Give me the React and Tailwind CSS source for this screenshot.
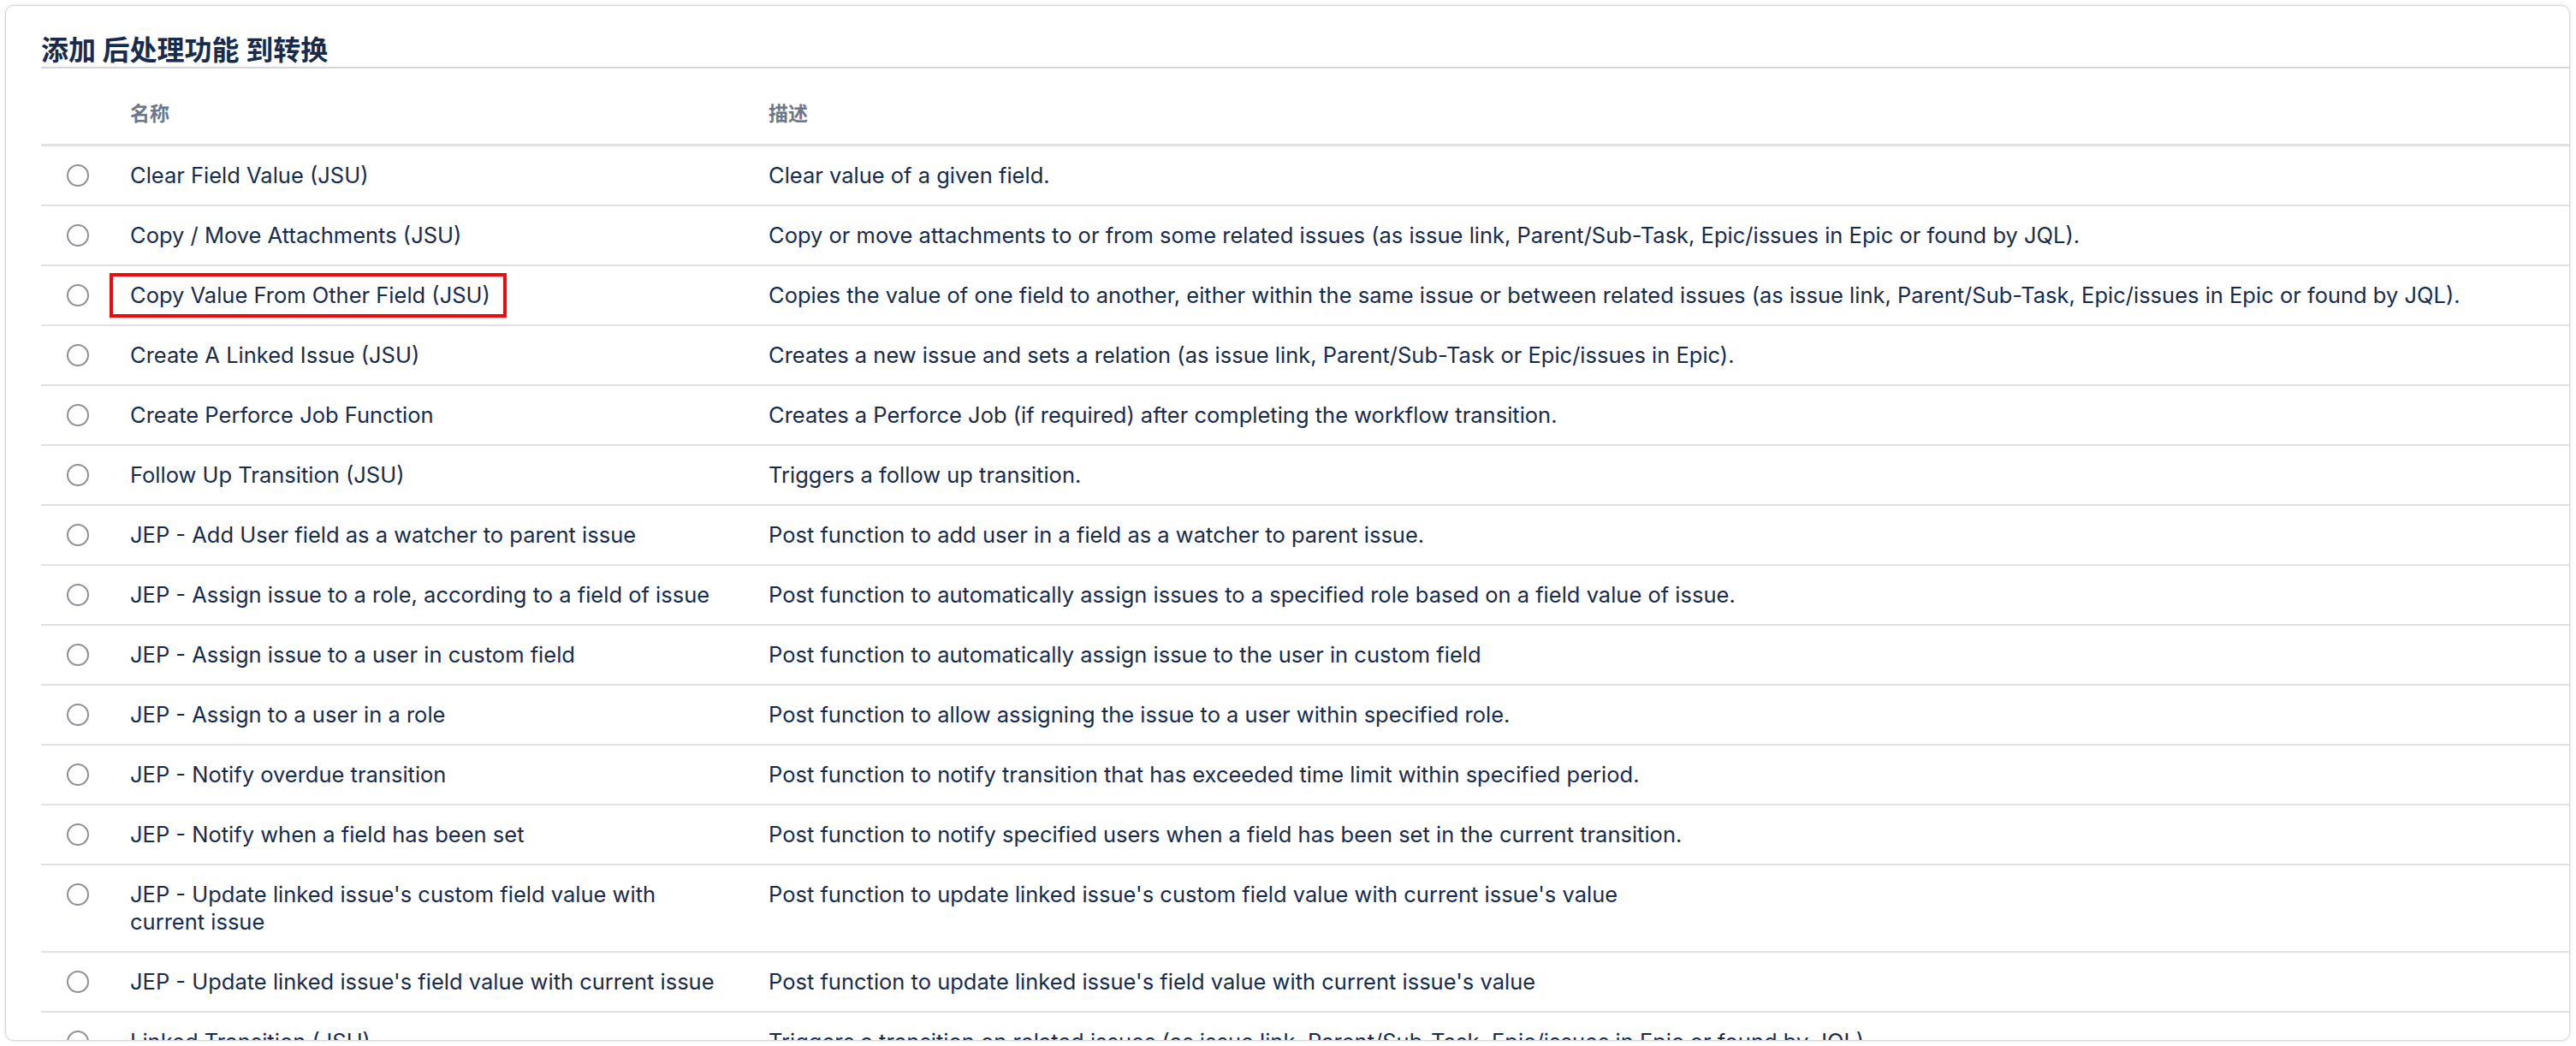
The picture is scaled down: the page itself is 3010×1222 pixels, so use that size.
import React from "react";

const FONT = { fontFamily: 'Inter, "Noto Sans CJK SC", sans-serif' };

// post functions available for the transition, in list order
const FUNCTIONS = [
  { name: "Clear Field Value (JSU)", desc: "Clear value of a given field." },
  {
    name: "Copy / Move Attachments (JSU)",
    desc: "Copy or move attachments to or from some related issues (as issue link, Parent/Sub-Task, Epic/issues in Epic or found by JQL).",
  },
  {
    name: "Copy Value From Other Field (JSU)",
    desc: "Copies the value of one field to another, either within the same issue or between related issues (as issue link, Parent/Sub-Task, Epic/issues in Epic or found by JQL).",
    marked: true,
  },
  {
    name: "Create A Linked Issue (JSU)",
    desc: "Creates a new issue and sets a relation (as issue link, Parent/Sub-Task or Epic/issues in Epic).",
  },
  {
    name: "Create Perforce Job Function",
    desc: "Creates a Perforce Job (if required) after completing the workflow transition.",
  },
  { name: "Follow Up Transition (JSU)", desc: "Triggers a follow up transition." },
  {
    name: "JEP - Add User field as a watcher to parent issue",
    desc: "Post function to add user in a field as a watcher to parent issue.",
  },
  {
    name: "JEP - Assign issue to a role, according to a field of issue",
    desc: "Post function to automatically assign issues to a specified role based on a field value of issue.",
  },
  {
    name: "JEP - Assign issue to a user in custom field",
    desc: "Post function to automatically assign issue to the user in custom field",
  },
  {
    name: "JEP - Assign to a user in a role",
    desc: "Post function to allow assigning the issue to a user within specified role.",
  },
  {
    name: "JEP - Notify overdue transition",
    desc: "Post function to notify transition that has exceeded time limit within specified period.",
  },
  {
    name: "JEP - Notify when a field has been set",
    desc: "Post function to notify specified users when a field has been set in the current transition.",
  },
  {
    name: "JEP - Update linked issue's custom field value with current issue",
    desc: "Post function to update linked issue's custom field value with current issue's value",
  },
  {
    name: "JEP - Update linked issue's field value with current issue",
    desc: "Post function to update linked issue's field value with current issue's value",
  },
  {
    name: "Linked Transition (JSU)",
    desc: "Triggers a transition on related issues (as issue link, Parent/Sub-Task, Epic/issues in Epic or found by JQL).",
  },
];

function Radio() {
  return (
    <span className="block w-[26px] h-[26px] rounded-full border-2 border-[#8d9099] bg-white" />
  );
}

function Row({ fn }) {
  return (
    <tr className="border-b-2 border-[#dfe1e6]">
      <td className="align-top py-[18px] pl-[30px]">
        <div className="h-[32px] flex items-center">
          <Radio />
        </div>
      </td>
      <td className="align-top py-[18px] pr-[58px] leading-[32px]">
        {fn.marked ? (
          <span className="relative inline-block">
            {fn.name}
            {/* annotation box drawn over the name */}
            <span className="absolute -top-[10px] -bottom-[10px] -left-[24px] -right-[19px] border-4 border-[#f00a0a]" />
          </span>
        ) : (
          fn.name
        )}
      </td>
      <td className="align-top py-[18px] leading-[32px]">{fn.desc}</td>
    </tr>
  );
}

export default function App() {
  return (
    <div className="w-[3010px] h-[1222px] bg-white pt-[6px] pl-[6px]" style={FONT}>
      <div className="w-[2997px] h-[1210px] overflow-hidden rounded-[10px] border border-[#d6d6d6] bg-white shadow-[0_0_4px_rgba(0,0,0,0.12)] pl-[41px]">
        <h2 className="pt-[33px] leading-[38px] text-[32px] font-bold text-[#172b4d] border-b-2 border-[#d4d5d9]">
          添加 后处理功能 到转换
        </h2>

        <table className="w-full table-fixed border-collapse text-[25.5px] text-[#172b4d]">
          <colgroup>
            <col className="w-[104px]" />
            <col className="w-[746px]" />
            <col />
          </colgroup>
          <thead>
            <tr className="border-b-[3px] border-[#dfe1e6]">
              <th />
              <th className="pt-[38px] pb-[20px] leading-[30px] text-left text-[23px] font-semibold text-[#6b778c]">
                名称
              </th>
              <th className="pt-[38px] pb-[20px] leading-[30px] text-left text-[23px] font-semibold text-[#6b778c]">
                描述
              </th>
            </tr>
          </thead>
          <tbody>
            {FUNCTIONS.map((fn) => (
              <Row key={fn.name} fn={fn} />
            ))}
          </tbody>
        </table>
      </div>
    </div>
  );
}
